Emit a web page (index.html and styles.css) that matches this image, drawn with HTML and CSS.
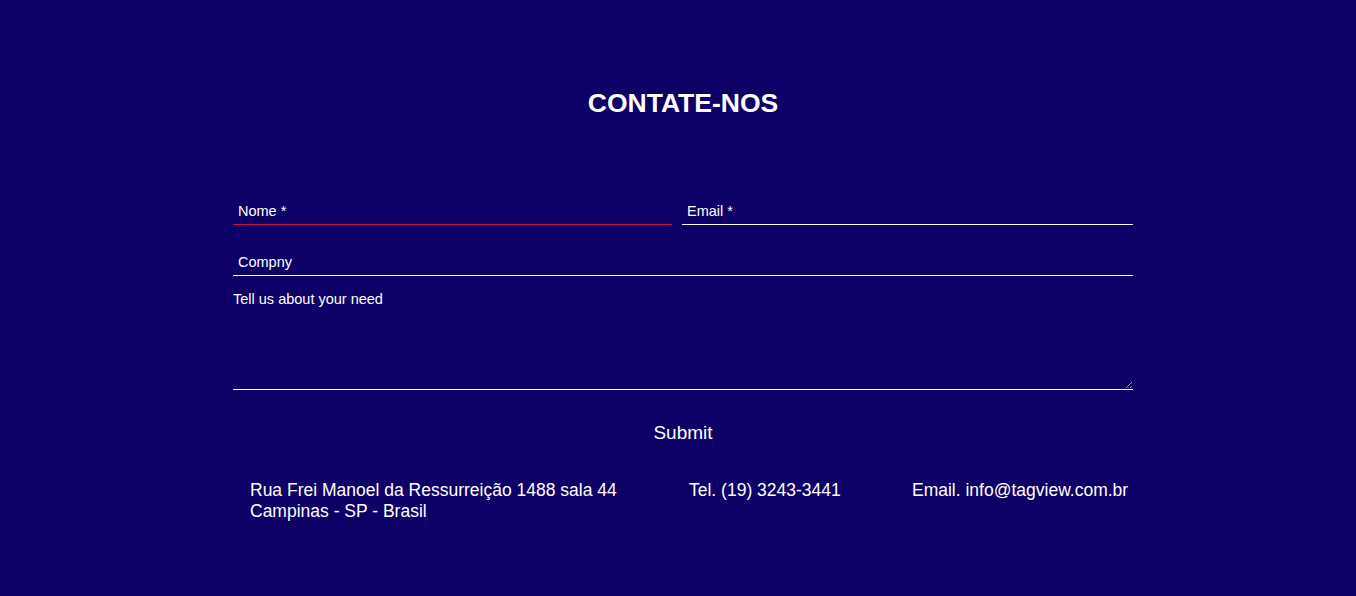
FILE: index.html
```html
<!DOCTYPE html>
<html lang="pt">
<head>
<meta charset="utf-8">
<title>Contate-nos</title>
<link rel="stylesheet" href="styles.css">
</head>
<body>
<section class="contact">
  <div class="container">
    <h1 class="title">CONTATE-NOS</h1>
    <form class="form">
      <div class="row row-first">
        <input class="field field-name" type="text" placeholder="Nome *">
        <input class="field field-email" type="text" placeholder="Email *">
      </div>
      <div class="row row-second">
        <input class="field field-full" type="text" placeholder="Compny">
      </div>
      <textarea class="message" placeholder="Tell us about your need"></textarea>
      <div class="submit-row">
        <button class="submit" type="button">Submit</button>
      </div>
    </form>
    <div class="info">
      <p class="address">Rua Frei Manoel da Ressurreição 1488 sala 44<br>Campinas - SP - Brasil</p>
      <p class="tel">Tel. (19) 3243-3441</p>
      <p class="mail">Email. info@tagview.com.br</p>
    </div>
  </div>
</section>
</body>
</html>
```

FILE: styles.css
```css
html, body {
  margin: 0;
  padding: 0;
  background: #0d0066;
  height: 100%;
}
body {
  font-family: "Liberation Sans", Arial, Helvetica, sans-serif;
  color: #ffffff;
}
.contact {
  padding-top: 88px;
}
.container {
  width: 900px;
  margin: 0 auto;
  padding-left: 10px;
}
.title {
  margin: 0;
  text-align: center;
  font-size: 26.5px;
  line-height: 30px;
  font-weight: bold;
}
.form {
  margin-top: 83px;
}
.row {
  display: flex;
  gap: 10px;
}
.row-first {
  margin-bottom: 27px;
}
.row-second {
  margin-bottom: 15px;
}
.field {
  box-sizing: border-box;
  height: 24px;
  padding: 0 5px 3px;
  border: 0;
  border-bottom: 1px solid #ffffff;
  background: transparent;
  color: #ffffff;
  font-family: "Liberation Sans", Arial, sans-serif;
  font-size: 14.5px;
  outline: none;
}
.field::placeholder, .message::placeholder {
  color: #ffffff;
  opacity: 1;
}
.field.field-name {
  width: 439px;
  border-bottom: 1px solid #c8103c;
}
.field-email {
  flex: 1;
}
.field-full {
  width: 100%;
}
.message {
  display: block;
  box-sizing: border-box;
  width: 100%;
  height: 99px;
  margin: 0;
  padding: 0;
  border: 0;
  border-bottom: 1px solid #ffffff;
  background: transparent;
  color: #ffffff;
  font-family: "Liberation Sans", Arial, sans-serif;
  font-size: 14.5px;
  outline: none;
}
.submit-row {
  display: flex;
  justify-content: center;
  margin-top: 32px;
}
.submit {
  background: transparent;
  border: 0;
  padding: 0;
  color: #ffffff;
  font-family: "Liberation Sans", Arial, sans-serif;
  font-size: 19px;
  line-height: 22px;
  cursor: pointer;
}
.info {
  display: flex;
  margin-top: 36px;
  font-size: 17.5px;
  line-height: 21px;
}
.info p {
  margin: 0;
}
.info .address {
  margin-left: 17px;
  width: 439px;
}
.tel {
  width: 223px;
}
.mail {
  white-space: nowrap;
}
```
